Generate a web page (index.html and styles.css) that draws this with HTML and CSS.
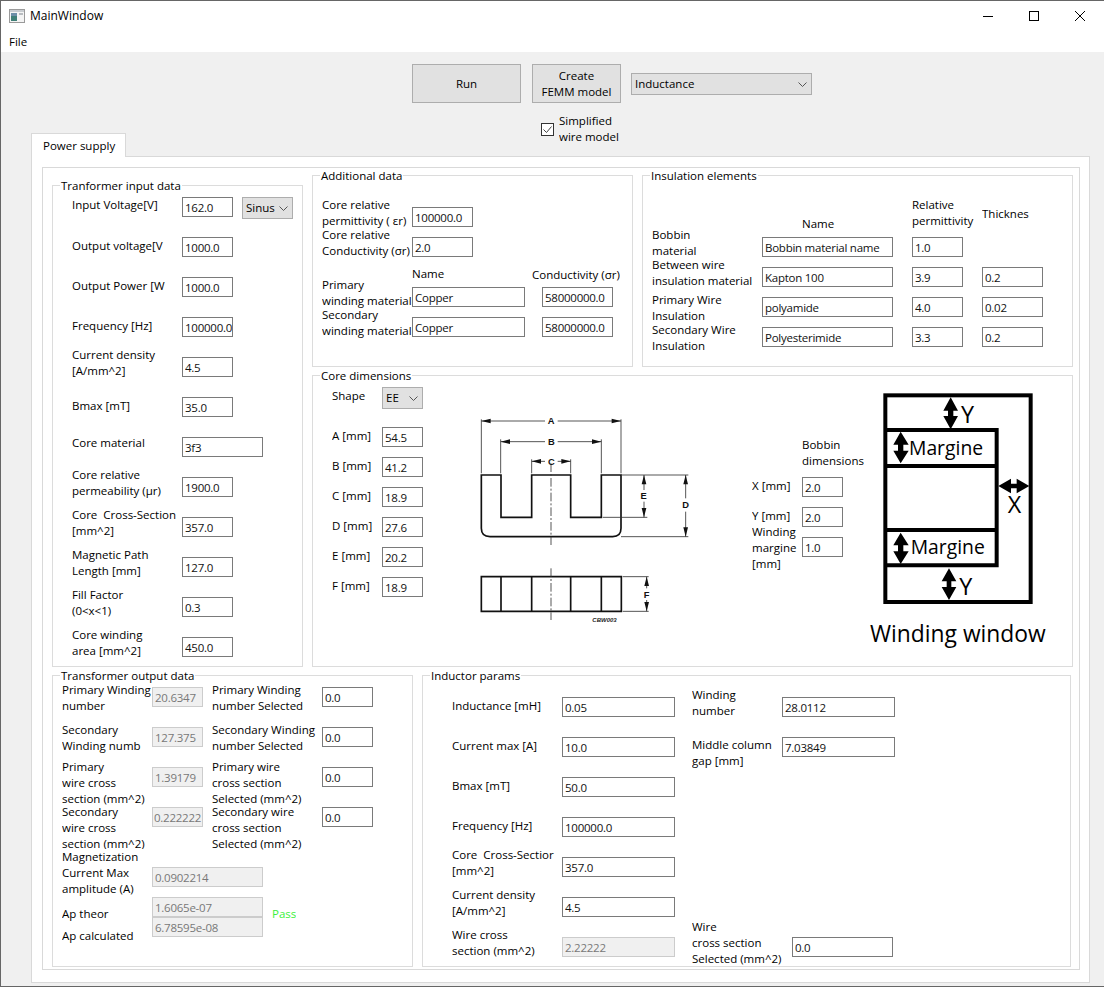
FILE: index.html
```html
<!DOCTYPE html>
<html lang="en">
<head>
    <meta charset="UTF-8">
    <meta name="viewport" content="width=device-width, initial-scale=1.0">
    <title>MainWindow</title>
    <link rel="stylesheet" href="styles.css">
</head>
<body>
<div class="window">
    <!-- Title bar -->
    <div class="titlebar">
        <svg class="app-icon" width="16" height="16" viewBox="0 0 16 16">
            <rect x="0.5" y="1.5" width="15" height="13" fill="#f4f4f4" stroke="#9a9a9a"/>
            <rect x="1" y="2" width="14" height="2" fill="#c8ccd0"/>
            <rect x="2" y="5" width="6" height="8" fill="#3f7f77"/>
            <rect x="2" y="5" width="6" height="3" fill="#6d8fa8"/>
            <rect x="10" y="5" width="4" height="2" fill="#b8bcc0"/>
        </svg>
        <span class="title-text">MainWindow</span>
        <div class="win-buttons">
            <svg width="46" height="30" viewBox="0 0 46 30"><path d="M18 15.5H28" stroke="#000" fill="none"/></svg>
            <svg width="46" height="30" viewBox="0 0 46 30"><rect x="18.5" y="10.5" width="9" height="9" stroke="#000" fill="none"/></svg>
            <svg width="46" height="30" viewBox="0 0 46 30"><path d="M18 10L28 20M28 10L18 20" stroke="#000" fill="none"/></svg>
        </div>
    </div>
    <div class="menubar"><span>File</span></div>

    <!-- Top controls -->
    <div class="toolbar">
        <div class="toolbar-row">
            <button class="btn btn-run">Run</button>
            <button class="btn btn-femm">Create<br>FEMM model</button>
            <div class="combo combo-mode"><span>Inductance</span><svg width="9" height="5" viewBox="0 0 9 5"><path d="M0.5 0.5L4.5 4.5L8.5 0.5" stroke="#555" fill="none"/></svg></div>
        </div>
        <div class="check-row">
            <span class="checkbox"><svg width="11" height="11" viewBox="0 0 11 11"><path d="M1.5 5.5L4.5 8.5L9.5 2.5" stroke="#444" fill="none"/></svg></span>
            <span class="lbl">Simplified<br>wire model</span>
        </div>
    </div>

    <div class="tab">Power supply</div>
    <div class="pane">
        <div class="frame">
            <div class="upper">
                <fieldset class="group group-input">
                    <legend>Tranformer input data</legend>
                    <div class="rows gap20">
                        <div class="row"><span class="lbl w110 up2">Input Voltage[V]</span><input class="field w51" value="162.0"><div class="combo combo-sinus"><span>Sinus</span><svg width="9" height="5" viewBox="0 0 9 5"><path d="M0.5 0.5L4.5 4.5L8.5 0.5" stroke="#555" fill="none"/></svg></div></div>
                        <div class="row"><span class="lbl w110 up1">Output voltage[V</span><input class="field w51" value="1000.0"></div>
                        <div class="row"><span class="lbl w110 up1">Output Power [W</span><input class="field w51" value="1000.0"></div>
                        <div class="row"><span class="lbl w110 up1">Frequency [Hz]</span><input class="field w51" value="100000.0"></div>
                        <div class="row"><span class="lbl w110 up4">Current density<br>[A/mm^2]</span><input class="field w51" value="4.5"></div>
                        <div class="row"><span class="lbl w110 up1">Bmax [mT]</span><input class="field w51" value="35.0"></div>
                        <div class="row"><span class="lbl w110 up4">Core material</span><input class="field w81" value="3f3"></div>
                        <div class="row"><span class="lbl w110 up4">Core relative<br>permeability (µr)</span><input class="field w51" value="1900.0"></div>
                        <div class="row"><span class="lbl w110 up4">Core&nbsp; Cross-Section<br>[mm^2]</span><input class="field w51" value="357.0"></div>
                        <div class="row"><span class="lbl w110 up4">Magnetic Path<br>Length [mm]</span><input class="field w51" value="127.0"></div>
                        <div class="row"><span class="lbl w110 up4">Fill Factor<br>(0&lt;x&lt;1)</span><input class="field w51" value="0.3"></div>
                        <div class="row"><span class="lbl w110 up4">Core winding<br>area [mm^2]</span><input class="field w51" value="450.0"></div>
                    </div>
                </fieldset>

                <div class="right-col">
                    <div class="top-row">
                        <fieldset class="group group-additional">
                            <legend>Additional data</legend>
                            <div class="rows gap10">
                                <div class="row"><span class="lbl w90 up4">Core relative<br>permittivity ( εr)</span><input class="field w61" value="100000.0"></div>
                                <div class="row"><span class="lbl w90 up4">Core relative<br>Conductivity (σr)</span><input class="field w61" value="2.0"></div>
                                <div class="row head-row"><span class="w90"></span><span class="lbl w120 head-name">Name</span><span class="lbl head-cond">Conductivity (σr)</span></div>
                                <div class="row"><span class="lbl w90 up4">Primary<br>winding material</span><input class="field w113" value="Copper"><input class="field w71 ml17" value="58000000.0"></div>
                                <div class="row"><span class="lbl w90 up4">Secondary<br>winding material</span><input class="field w113" value="Copper"><input class="field w71 ml17" value="58000000.0"></div>
                            </div>
                        </fieldset>
                        <fieldset class="group group-insulation">
                            <legend>Insulation elements</legend>
                            <div class="rows gap10">
                                <div class="row"><span class="w110"></span><span class="lbl w150 head-ins">Name</span><span class="lbl w70 up4">Relative<br>permittivity</span><span class="lbl up3">Thicknes</span></div>
                                <div class="row"><span class="lbl w110 up4">Bobbin<br>material</span><input class="field w131" value="Bobbin material name"><input class="field w51 ml19" value="1.0"></div>
                                <div class="row"><span class="lbl w110 up4">Between wire<br>insulation material</span><input class="field w131" value="Kapton 100"><input class="field w51 ml19" value="3.9"><input class="field w61 ml19" value="0.2"></div>
                                <div class="row"><span class="lbl w110 down1">Primary Wire<br>Insulation</span><input class="field w131" value="polyamide"><input class="field w51 ml19" value="4.0"><input class="field w61 ml19" value="0.02"></div>
                                <div class="row"><span class="lbl w110 down1">Secondary Wire<br>Insulation</span><input class="field w131" value="Polyesterimide"><input class="field w51 ml19" value="3.3"><input class="field w61 ml19" value="0.2"></div>
                            </div>
                        </fieldset>
                    </div>

                    <fieldset class="group group-core">
                        <legend>Core dimensions</legend>
                        <div class="core-body">
                            <div class="rows gap10 core-dims">
                                <div class="row shape-row"><span class="lbl w50 shape-lbl">Shape</span><div class="combo combo-shape"><span>EE</span><svg width="9" height="5" viewBox="0 0 9 5"><path d="M0.5 0.5L4.5 4.5L8.5 0.5" stroke="#555" fill="none"/></svg></div></div>
                                <div class="row"><span class="lbl w50 up1">A [mm]</span><input class="field w41" value="54.5"></div>
                                <div class="row"><span class="lbl w50 up1">B [mm]</span><input class="field w41" value="41.2"></div>
                                <div class="row"><span class="lbl w50 up1">C [mm]</span><input class="field w41" value="18.9"></div>
                                <div class="row"><span class="lbl w50 up1">D [mm]</span><input class="field w41" value="27.6"></div>
                                <div class="row"><span class="lbl w50 up1">E [mm]</span><input class="field w41" value="20.2"></div>
                                <div class="row"><span class="lbl w50 up1">F [mm]</span><input class="field w41" value="18.9"></div>
                            </div>

                            <svg class="core-drawing" width="240" height="230" viewBox="0 0 720 690">
                                <g fill="none" stroke="#111" stroke-width="5">
                                    <path d="M64 225H123V352H215V225H332V352H424V225H483V385Q483 410 458 410H90Q64 410 64 385Z"/>
                                    <path d="M64 530H484V634H64ZM123 530V634M215 530V634M332 530V634M424 530V634"/>
                                </g>
                                <g fill="none" stroke="#333" stroke-width="2.5">
                                    <path d="M64 58V220M483 58V220M122 118V220M424 118V220M215 178V220M332 178V220"/>
                                    <path d="M64 63H255M293 63H483M122 125H255M293 125H424M215 184H255M293 184H332"/>
                                    <path d="M483 225H685M428 352H562M483 410H685M488 530H566M488 634H566"/>
                                    <path d="M552 225V270M552 305V352M677 225V295M677 335V410M560 530V565M560 600V634"/>
                                    <path d="M273 190V435M273 505V660" stroke-dasharray="26 6 6 6"/>
                                </g>
                                <g fill="#111">
                                    <path d="M64 63L92 56V70ZM483 63L455 56V70ZM122 125L150 118V132ZM424 125L396 118V132ZM215 184L243 177V191ZM332 184L304 177V191Z"/>
                                    <path d="M552 225L545 253H559ZM552 352L545 324H559ZM677 225L670 253H684ZM677 410L670 382H684ZM560 530L553 558H567ZM560 634L553 606H567Z"/>
                                </g>
                                <g class="dim-text" text-anchor="middle">
                                    <text x="273" y="72">A</text>
                                    <text x="274" y="134">B</text>
                                    <text x="274" y="194">C</text>
                                    <text x="551" y="298">E</text>
                                    <text x="677" y="325">D</text>
                                    <text x="560" y="595">F</text>
                                </g>
                                <text class="dim-code" x="397" y="665">CBW003</text>
                            </svg>

                            <div class="rows gap10 bobbin">
                                <div class="row"><span class="w50"></span><span class="lbl up4">Bobbin<br>dimensions</span></div>
                                <div class="row"><span class="lbl w50 up1">X [mm]</span><input class="field w41" value="2.0"></div>
                                <div class="row"><span class="lbl w50 up1">Y [mm]</span><input class="field w41" value="2.0"></div>
                                <div class="row"><span class="lbl w50 clip">Winding<br>margine<br>[mm]</span><input class="field w41" value="1.0"></div>
                            </div>

                            <svg class="window-drawing" width="200" height="280" viewBox="0 0 600 840">
                                <g fill="none" stroke="#000" stroke-width="12">
                                    <rect x="76" y="46" width="436" height="620"/>
                                    <path d="M76 150H410V258H76M76 450H410V556H76M410 258V450"/>
                                </g>
                                <g fill="#000">
                                    <path d="M272 52L294 92H280V108H294L272 148L250 108H264V92H250Z"/>
                                    <path d="M122 155L146 194H130V212H146L122 250L100 212H114V194H100Z"/>
                                    <path d="M122 458L146 496H130V514H146L122 552L100 514H114V496H100Z"/>
                                    <path d="M267 565L289 604H274V621H289L267 660L245 621H260V604H245Z"/>
                                    <path d="M415 318L453 296V311H470V296L508 318L470 340V325H453V340Z"/>
                                </g>
                                <g class="win-text">
                                    <text x="303" y="129" font-size="70">Y</text>
                                    <text x="147" y="226" font-size="58">Margine</text>
                                    <text x="152" y="522" font-size="58">Margine</text>
                                    <text x="443" y="400" font-size="70">X</text>
                                    <text x="298" y="645" font-size="70">Y</text>
                                    <text x="30" y="785" font-size="68.5">Winding window</text>
                                </g>
                            </svg>
                        </div>
                    </fieldset>
                </div>
            </div>

            <div class="lower">
                <fieldset class="group group-output">
                    <legend>Transformer output data</legend>
                    <div class="rows gap20">
                        <div class="row"><span class="lbl w90 up-half">Primary Winding<br>number</span><input class="field w51" value="20.6347" disabled><span class="lbl w110 ml9 up-half">Primary Winding<br>number Selected</span><input class="field w51" value="0.0"></div>
                        <div class="row"><span class="lbl w90 up-half">Secondary<br>Winding numb</span><input class="field w51" value="127.375" disabled><span class="lbl w110 ml9 up-half">Secondary Winding<br>number Selected</span><input class="field w51" value="0.0"></div>
                        <div class="row"><span class="lbl w90 down6">Primary<br>wire cross<br>section (mm^2)</span><input class="field w51" value="1.39179" disabled><span class="lbl w110 ml9 down6">Primary wire<br>cross section<br>Selected (mm^2)</span><input class="field w51" value="0.0"></div>
                        <div class="row"><span class="lbl w90 clip-output">Secondary<br>wire cross<br>section (mm^2)</span><input class="field w51 tight" value="0.222222" disabled><span class="lbl w110 ml9 down11">Secondary wire<br>cross section<br>Selected (mm^2)</span><input class="field w51" value="0.0"></div>
                    </div>
                    <div class="rows ap-rows">
                        <div class="row"><span class="lbl w90 up4">Magnetization<br>Current Max<br>amplitude (A)</span><input class="field w111" value="0.0902214" disabled></div>
                        <div class="row mt10"><span class="lbl w90 down7">Ap theor</span><input class="field w111" value="1.6065e-07" disabled><span class="lbl pass">Pass</span></div>
                        <div class="row"><span class="lbl w90 down9">Ap calculated</span><input class="field w111" value="6.78595e-08" disabled></div>
                    </div>
                </fieldset>

                <fieldset class="group group-inductor">
                    <legend>Inductor params</legend>
                    <div class="rows gap20">
                        <div class="row"><span class="lbl w110 up1">Inductance [mH]</span><input class="field w113" value="0.05"><span class="lbl w90 ml17 up4">Winding<br>number</span><input class="field w113" value="28.0112"></div>
                        <div class="row"><span class="lbl w110 up1">Current max [A]</span><input class="field w113" value="10.0"><span class="lbl w90 ml17 down6">Middle column<br>gap [mm]</span><input class="field w113" value="7.03849"></div>
                        <div class="row"><span class="lbl w110 up1">Bmax [mT]</span><input class="field w113" value="50.0"></div>
                        <div class="row"><span class="lbl w110 up1">Frequency [Hz]</span><input class="field w113" value="100000.0"></div>
                        <div class="row"><span class="lbl w110 up4">Core&nbsp; Cross-Sectior<br>[mm^2]</span><input class="field w113" value="357.0"></div>
                        <div class="row"><span class="lbl w110 up4">Current density<br>[A/mm^2]</span><input class="field w113" value="4.5"></div>
                        <div class="row"><span class="lbl w110 up4">Wire cross<br>section (mm^2)</span><input class="field w113" value="2.22222" disabled><span class="lbl w100 ml17 up4">Wire<br>cross section<br>Selected (mm^2)</span><input class="field w101" value="0.0"></div>
                    </div>
                </fieldset>
            </div>
        </div>
    </div>
</div>
</body>
</html>
```

FILE: styles.css
```css
* {
    box-sizing: border-box;
}
body {
    margin: 0;
    background-color: #f0f0f0;
    font-family: "Open Sans", "Noto Sans", sans-serif;
    font-size: 11.5px;
    line-height: 16px;
    color: #000;
}
.window {
    width: 1104px;
    height: 987px;
    overflow: hidden;
    border-top: 1px solid #666;
    border-left: 1px solid #666;
    border-bottom: 1px solid #666;
}

/* Title and menu */
.titlebar {
    height: 29px;
    background-color: #fff;
    display: flex;
    align-items: center;
    padding-left: 8px;
}
.app-icon {
    flex: none;
}
.title-text {
    margin-left: 5px;
    font-size: 12px;
}
.win-buttons {
    margin-left: auto;
    padding-right: 1px;
    display: flex;
    height: 30px;
}
.menubar {
    height: 22px;
    background-color: #fff;
    padding: 4px 0 0 8px;
}

/* Top controls */
.toolbar {
    height: 81px;
    padding: 12px 0 0 411px;
}
.toolbar-row {
    display: flex;
    align-items: center;
    gap: 10px;
}
.btn {
    height: 39px;
    padding: 0;
    background-color: #e1e1e1;
    border: 1px solid #adadad;
    font: inherit;
    color: #000;
}
.btn-run {
    width: 109px;
}
.btn-femm {
    width: 89px;
    margin-left: 1px;
}
.combo {
    display: flex;
    align-items: center;
    justify-content: space-between;
    height: 22px;
    padding: 0 4px 0 3px;
    background-color: #e1e1e1;
    border: 1px solid #adadad;
}
.combo-mode {
    width: 181px;
    margin-top: 1px;
}
.combo-sinus {
    width: 51px;
    margin: 2px 0 0 9px;
}
.combo-shape {
    width: 41px;
}
.check-row {
    display: flex;
    align-items: center;
    gap: 5px;
    margin: 10px 0 0 129px;
}
.checkbox {
    width: 13px;
    height: 13px;
    border: 1px solid #333;
    background-color: #fff;
    display: flex;
}

/* Tab */
.tab {
    width: 95px;
    height: 24px;
    margin-left: 30px;
    background-color: #fff;
    border: 1px solid #d9d9d9;
    border-bottom: none;
    padding: 4px 0 0 11px;
    position: relative;
    z-index: 1;
}
.pane {
    width: 1059px;
    height: 827px;
    margin: -1px 0 0 30px;
    background-color: #fff;
    border: 1px solid #d9d9d9;
    padding: 10px 0 0 10px;
}
.frame {
    width: 1038px;
    height: 803px;
    border: 1px solid #d9d9d9;
    padding-left: 9px;
}

/* Group boxes */
.upper {
    display: flex;
    gap: 9px;
}
.right-col {
    width: 761px;
    margin-top: -1px;
}
.top-row {
    display: flex;
    gap: 9px;
    height: 200px;
}
.lower {
    display: flex;
    gap: 9px;
}
.group {
    margin: 0;
    min-width: 0;
    border: 1px solid #dcdcdc;
    padding: 0;
}
.group legend {
    margin-left: 7px;
    padding: 0 1px;
    height: 16px;
    line-height: 18px;
}
.group-input {
    width: 251px;
    height: 490px;
    margin-top: 9px;
}
.group-input .rows {
    padding: 4px 0 0 19px;
}
.group-additional {
    width: 321px;
}
.group-insulation {
    width: 431px;
}
.group-additional .rows,
.group-insulation .rows {
    padding: 24px 0 0 9px;
}
.group-core {
    height: 300px;
}
.group-output {
    width: 361px;
    height: 300px;
}
.group-output .rows {
    padding: 4px 0 0 9px;
}
.group-inductor {
    width: 649px;
    height: 300px;
}
.group-inductor .rows {
    padding: 14px 0 0 29px;
}
.core-body {
    display: flex;
    align-items: flex-start;
    padding-left: 19px;
}
.core-dims {
    width: 128px;
    padding-top: 4px;
}
.core-drawing {
    margin-top: 17px;
    flex: none;
}
.bobbin {
    width: 112px;
    margin: 64px 0 0 52px;
}
.window-drawing {
    margin: -3px 0 0 -4px;
    flex: none;
}
.dim-text {
    font-family: "Liberation Sans", sans-serif;
    font-weight: bold;
    font-size: 28px;
    fill: #111;
}
.dim-code {
    font-family: "Liberation Sans", sans-serif;
    font-weight: bold;
    font-style: italic;
    font-size: 18px;
    fill: #222;
}
.win-text text {
    font-family: "Open Sans", sans-serif;
    fill: #000;
}

/* Form rows */
.rows {
    display: flex;
    flex-direction: column;
}
.gap10 {
    gap: 10px;
}
.gap20 {
    gap: 20px;
}
.group-output .ap-rows {
    padding-top: 40px;
}
.row {
    display: flex;
    align-items: center;
    height: 20px;
}
.head-row {
    height: 10px;
}
.shape-row {
    height: 30px;
    align-items: flex-start;
}
.shape-lbl {
    margin-top: 1px;
}
.mt10 {
    margin-top: 10px;
}
.lbl {
    flex: none;
    white-space: nowrap;
    overflow: hidden;
}
.field {
    flex: none;
    height: 20px;
    padding: 0 0 0 2px;
    background-color: #fff;
    border: 1px solid #7a7a7a;
    border-radius: 0;
    font: inherit;
    letter-spacing: -0.25px;
    color: #111;
    outline: none;
}
.field:disabled {
    background-color: #f0f0f0;
    border-color: #ccc;
    color: #787878;
}
.tight {
    padding-left: 1px;
}
.pass {
    margin: 14px 0 0 9px;
    color: #3cf03c;
}

/* Widths */
.w41 { width: 41px; }
.w50 { width: 50px; }
.w51 { width: 51px; }
.w61 { width: 61px; }
.w70 { width: 70px; }
.w71 { width: 71px; }
.w81 { width: 81px; }
.w90 { width: 90px; }
.w100 { width: 100px; }
.w101 { width: 101px; }
.w110 { width: 110px; }
.w111 { width: 111px; }
.w113 { width: 113px; }
.w120 { width: 120px; }
.w131 { width: 131px; }
.w150 { width: 150px; }
.ml9 { margin-left: 9px; }
.ml17 { margin-left: 17px; }
.ml19 { margin-left: 19px; }

/* Label nudges, rows are centred on the field */
.up1 { margin-bottom: 2px; }
.up2 { margin-bottom: 4px; }
.up3 { margin-bottom: 6px; }
.up4 { margin-bottom: 8px; }
.up-half { margin-top: 2px; }
.down1 { margin-top: 2px; }
.down6 { margin-top: 12px; }
.down7 { margin-top: 14px; }
.down9 { margin-top: 18px; }
.down11 { margin-top: 22px; }
.head-name {
    margin-top: 4px;
}
.head-cond {
    margin-top: 6px;
}
.head-ins {
    margin-top: 14px;
    padding-left: 40px;
}
.clip {
    height: 46px;
}
.clip-output {
    height: 45px;
    margin-top: 19px;
}
```
